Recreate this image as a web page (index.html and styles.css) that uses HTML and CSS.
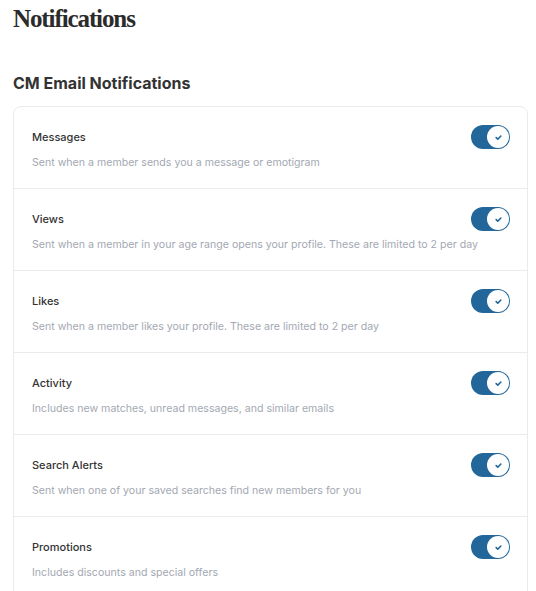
FILE: index.html
```html
<!DOCTYPE html>
<html>
<head>
    <title>Notifications</title>
    <link rel="stylesheet" href="styles.css">
</head>
<body>
    <div class="page">
        <h1 class="page-title">Notifications</h1>
        <h2 class="section-title">CM Email Notifications</h2>
        <div class="card">
            <div class="row">
                <div class="row-head">
                    <span class="row-title">Messages</span>
                    <span class="toggle"><span class="knob"><svg viewBox="0 0 10 10" width="9" height="9"><path d="M2.4 5.2 L4.2 6.9 L7.6 3.4" fill="none" stroke="#23679a" stroke-width="1.8" stroke-linecap="round" stroke-linejoin="round"/></svg></span></span>
                </div>
                <div class="row-desc">Sent when a member sends you a message or emotigram</div>
            </div>
            <div class="row">
                <div class="row-head">
                    <span class="row-title">Views</span>
                    <span class="toggle"><span class="knob"><svg viewBox="0 0 10 10" width="9" height="9"><path d="M2.4 5.2 L4.2 6.9 L7.6 3.4" fill="none" stroke="#23679a" stroke-width="1.8" stroke-linecap="round" stroke-linejoin="round"/></svg></span></span>
                </div>
                <div class="row-desc">Sent when a member in your age range opens your profile. These are limited to 2 per day</div>
            </div>
            <div class="row">
                <div class="row-head">
                    <span class="row-title">Likes</span>
                    <span class="toggle"><span class="knob"><svg viewBox="0 0 10 10" width="9" height="9"><path d="M2.4 5.2 L4.2 6.9 L7.6 3.4" fill="none" stroke="#23679a" stroke-width="1.8" stroke-linecap="round" stroke-linejoin="round"/></svg></span></span>
                </div>
                <div class="row-desc">Sent when a member likes your profile. These are limited to 2 per day</div>
            </div>
            <div class="row">
                <div class="row-head">
                    <span class="row-title">Activity</span>
                    <span class="toggle"><span class="knob"><svg viewBox="0 0 10 10" width="9" height="9"><path d="M2.4 5.2 L4.2 6.9 L7.6 3.4" fill="none" stroke="#23679a" stroke-width="1.8" stroke-linecap="round" stroke-linejoin="round"/></svg></span></span>
                </div>
                <div class="row-desc">Includes new matches, unread messages, and similar emails</div>
            </div>
            <div class="row">
                <div class="row-head">
                    <span class="row-title">Search Alerts</span>
                    <span class="toggle"><span class="knob"><svg viewBox="0 0 10 10" width="9" height="9"><path d="M2.4 5.2 L4.2 6.9 L7.6 3.4" fill="none" stroke="#23679a" stroke-width="1.8" stroke-linecap="round" stroke-linejoin="round"/></svg></span></span>
                </div>
                <div class="row-desc">Sent when one of your saved searches find new members for you</div>
            </div>
            <div class="row">
                <div class="row-head">
                    <span class="row-title">Promotions</span>
                    <span class="toggle"><span class="knob"><svg viewBox="0 0 10 10" width="9" height="9"><path d="M2.4 5.2 L4.2 6.9 L7.6 3.4" fill="none" stroke="#23679a" stroke-width="1.8" stroke-linecap="round" stroke-linejoin="round"/></svg></span></span>
                </div>
                <div class="row-desc">Includes discounts and special offers</div>
            </div>
        </div>
    </div>
</body>
</html>
```

FILE: styles.css
```css
body {
    margin: 0;
    background: #fff;
    font-family: Inter, "Noto Sans", sans-serif;
    color: #333;
}
.page {
    padding: 3px 8px 0 13px;
}
.page-title {
    margin: 0;
    font-family: "Liberation Serif", serif;
    font-size: 25px;
    font-weight: bold;
    letter-spacing: -1.1px;
    line-height: 31px;
    color: #2b2b2b;
}
.section-title {
    margin: 38px 0 0;
    font-size: 16px;
    font-weight: 700;
    line-height: 22px;
    color: #333;
}
.card {
    margin-top: 12px;
    border: 1px solid #ebebee;
    border-radius: 8px;
}
.row {
    padding: 18px 17px 17px 18px;
    border-bottom: 1px solid #ebebee;
}
.row:last-child {
    border-bottom: none;
}
.row-head {
    display: flex;
    align-items: center;
    justify-content: space-between;
    height: 24px;
}
.row-title {
    font-size: 11px;
    font-weight: 500;
    color: #333;
}
.row-desc {
    margin-top: 6px;
    font-size: 10.6px;
    line-height: 16px;
    color: #a3a8b2;
}
.toggle {
    display: flex;
    justify-content: flex-end;
    align-items: center;
    width: 39px;
    height: 24px;
    padding: 1px;
    box-sizing: border-box;
    border-radius: 12px;
    background: #23679a;
}
.knob {
    display: flex;
    align-items: center;
    justify-content: center;
    width: 22px;
    height: 22px;
    border-radius: 50%;
    background: #fff;
}
```
